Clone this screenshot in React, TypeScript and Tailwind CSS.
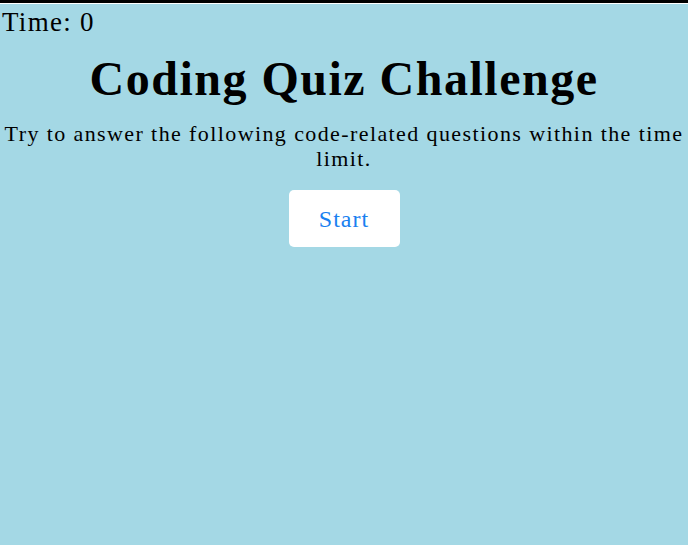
import React from "react";

export default function App() {
  return (
    <div
      className="min-h-[545px] w-full bg-[#a4d8e5] border-t-[3px] border-black text-black"
      style={{ fontFamily: '"Liberation Serif", serif' }}
    >
      <div className="h-px bg-white" />
      <div className="text-[27px] leading-[30px] pl-[2px] pt-[3px] tracking-[1.3px]">Time: 0</div>
      <h1 className="text-center font-bold text-[48px] leading-[56px] mt-[14px] tracking-[1.5px]">
        Coding Quiz Challenge
      </h1>
      <p className="text-center text-[22px] leading-[25px] mt-[14px] tracking-[1.4px]">
        Try to answer the following code-related questions within the time limit.
      </p>
      <div className="flex justify-center mt-[19px]">
        <button className="w-[111px] h-[57px] bg-white rounded-[5px] text-[#1a80f0] text-[24px] tracking-[1px]">
          Start
        </button>
      </div>
    </div>
  );
}
